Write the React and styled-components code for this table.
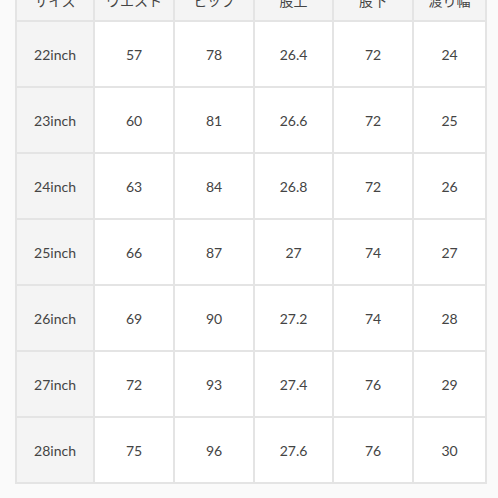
import React from 'react';
import styled, { createGlobalStyle } from 'styled-components';

const GlobalStyle = createGlobalStyle`
  html, body {
    margin: 0;
    padding: 0;
    background: #fafafa;
  }
  body {
    font-family: Lato, "Noto Sans CJK JP", sans-serif;
    color: #444;
  }
`;

const Page = styled.div`
  width: 498px;
  height: 498px;
  overflow: hidden;
  padding: 0 13px 0 15px;
  box-sizing: border-box;
`;

const Table = styled.table`
  margin-top: -20px;
  width: 470px;
  border-collapse: collapse;
  table-layout: fixed;
  background: #fff;
`;

const HeadCell = styled.th`
  height: 40px;
  padding: 0;
  font-weight: 400;
  font-size: 14px;
  color: #444;
  background: #f4f4f4;
  border: 2px solid #e4e4e4;
  border-top: none;
  text-align: center;
  font-family: "Noto Sans CJK JP", sans-serif;
`;

const Cell = styled.td`
  height: 64px;
  padding: 0;
  font-size: 14px;
  text-align: center;
  border: 2px solid #e4e4e4;
  background: ${p => (p.$label ? '#f4f4f4' : '#fff')};
  color: #444;
`;

const widths = [78, 80, 80, 79, 80, 73];
const headers = ['サイズ', 'ウエスト', 'ヒップ', '股上', '股下', '渡り幅'];

const rows = [
  ['22inch', '57', '78', '26.4', '72', '24'],
  ['23inch', '60', '81', '26.6', '72', '25'],
  ['24inch', '63', '84', '26.8', '72', '26'],
  ['25inch', '66', '87', '27', '74', '27'],
  ['26inch', '69', '90', '27.2', '74', '28'],
  ['27inch', '72', '93', '27.4', '76', '29'],
  ['28inch', '75', '96', '27.6', '76', '30'],
];

export default function App() {
  return (
    <Page>
      <GlobalStyle />
      <Table>
        <colgroup>
          {widths.map((w, i) => (
            <col key={i} style={{ width: w }} />
          ))}
        </colgroup>
        <thead>
          <tr>
            {headers.map(h => (
              <HeadCell key={h}>{h}</HeadCell>
            ))}
          </tr>
        </thead>
        <tbody>
          {rows.map(r => (
            <tr key={r[0]}>
              {r.map((v, i) => (
                <Cell key={i} $label={i === 0}>
                  {v}
                </Cell>
              ))}
            </tr>
          ))}
        </tbody>
      </Table>
    </Page>
  );
}
